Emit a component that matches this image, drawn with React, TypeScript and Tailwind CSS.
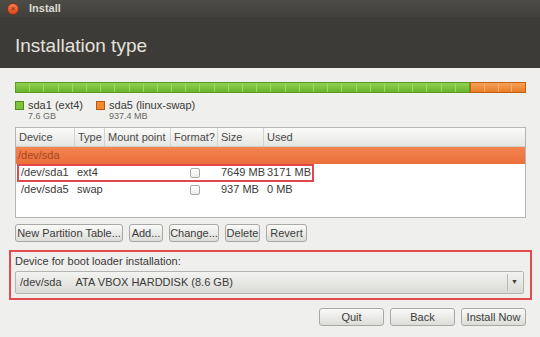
import React from "react";

const columns = [
    { label: "Device", width: "w-[59px]" },
    { label: "Type", width: "w-[30px]" },
    { label: "Mount point", width: "w-[66px]" },
    { label: "Format?", width: "w-[47px]" },
    { label: "Size", width: "w-[46px]" },
    { label: "Used", width: "flex-1" },
];

function CheckBox() {
    return <div className="w-[10px] h-[10px] rounded-[2px] border border-[#a9a9a5] bg-gradient-to-b from-white to-[#ececea]" />;
}

function PartitionRow(props: { device: string; type: string; size: string; used: string; boxed?: boolean }) {
    return (
        <div className="relative flex h-[17px] items-center whitespace-nowrap text-[#3a3a38]">
            <div className="w-[59px] pl-[5px]">{props.device}</div>
            <div className="w-[30px] pl-[2px]">{props.type}</div>
            <div className="w-[66px]" />
            <div className="w-[47px] flex justify-center"><CheckBox /></div>
            <div className="w-[46px] pl-[3px]">{props.size}</div>
            <div className="flex-1 pl-[3px]">{props.used}</div>
            {props.boxed && (
                <div className="absolute left-[1px] top-0 w-[297px] h-[18px] border-2 border-[#e2474d]" />
            )}
        </div>
    );
}

function Button(props: { label: string; className?: string }) {
    return (
        <div className={"h-[18px] flex items-center justify-center whitespace-nowrap rounded-[3px] border border-[#a8a8a4] bg-gradient-to-b from-[#fafaf9] to-[#dcdcd8] text-[11px] text-[#3c3c3a] " + (props.className || "")}>
            {props.label}
        </div>
    );
}

function App() {
    const greenSegments = Array.from({ length: 32 });
    const orangeSegments = Array.from({ length: 4 });

    return (
        <div className="w-[540px] h-[337px] overflow-hidden bg-[#efefed] font-['Liberation_Sans',Arial,sans-serif]">

            <div className="h-[68px] bg-[#3c3b37]">
                <div className="h-[17px] flex items-center bg-gradient-to-b from-[#4d4c47] to-[#403f3b]">
                    <div className="ml-[7px] w-[12px] h-[12px] rounded-full bg-gradient-to-b from-[#f57d52] to-[#d9461b] border border-[#8f3214] flex items-center justify-center text-[8px] leading-none text-[#7a2a10]">
                        ×
                    </div>
                    <span className="ml-[10px] text-[11px] font-bold text-[#dcd9d2]">Install</span>
                </div>
                <h1 className="mt-[17px] pl-[15px] text-[19px] leading-[24px] text-[#e4e1dc]">
                    Installation type
                </h1>
            </div>

            <div className="px-[15px] pt-[14px]">

                <div className="flex h-[11px] w-[511px]">
                    <div className="w-[455px] flex border border-[#5c9a24] bg-gradient-to-b from-[#8fd24e] to-[#6cb32c]">
                        {greenSegments.map((_, i) => (
                            <div key={i} className="flex-1 border-r border-[#9bd864] last:border-r-0" />
                        ))}
                    </div>
                    <div className="flex-1 flex border border-[#c45f16] bg-gradient-to-b from-[#f7a055] to-[#e87d25]">
                        {orangeSegments.map((_, i) => (
                            <div key={i} className="flex-1 border-r border-[#f3ae6f] last:border-r-0" />
                        ))}
                    </div>
                </div>

                <div className="mt-[6px] flex text-[#3a3a38]">
                    <div className="flex">
                        <div className="mt-[2px] w-[9px] h-[9px] border border-[#4f8a1c] bg-[#7cc53a]" />
                        <div className="ml-[4px]">
                            <div className="text-[11px] leading-[12px]">sda1 (ext4)</div>
                            <div className="text-[9px] leading-[11px] text-[#6a6a66]">7.6 GB</div>
                        </div>
                    </div>
                    <div className="ml-[13px] flex">
                        <div className="mt-[2px] w-[9px] h-[9px] border border-[#b9560f] bg-[#f08a2d]" />
                        <div className="ml-[4px]">
                            <div className="text-[11px] leading-[12px]">sda5 (linux-swap)</div>
                            <div className="text-[9px] leading-[11px] text-[#6a6a66]">937.4 MB</div>
                        </div>
                    </div>
                </div>

                <div className="mt-[5px] w-[511px] h-[91px] border border-[#b5b5b1] bg-white text-[11px]">
                    <div className="flex h-[19px] bg-gradient-to-b from-[#fbfbfa] to-[#e6e6e3] border-b border-[#cfcfcb] text-[#4a4a48] whitespace-nowrap">
                        {columns.map((col) => (
                            <div key={col.label} className={col.width + " flex items-center pl-[3px] border-r border-[#d2d2ce] last:border-r-0"}>
                                {col.label}
                            </div>
                        ))}
                    </div>
                    <div className="h-[17px] flex items-center pl-[2px] bg-gradient-to-b from-[#f2834f] to-[#ec6f3a] text-[#a4471f]">
                        /dev/sda
                    </div>
                    <PartitionRow device="/dev/sda1" type="ext4" size="7649 MB" used="3171 MB" boxed />
                    <PartitionRow device="/dev/sda5" type="swap" size="937 MB" used="0 MB" />
                </div>

                <div className="mt-[6px] flex gap-[6px]">
                    <Button label="New Partition Table..." className="w-[108px]" />
                    <Button label="Add..." className="w-[34px]" />
                    <Button label="Change..." className="w-[50px]" />
                    <Button label="Delete" className="w-[35px]" />
                    <Button label="Revert" className="w-[41px]" />
                </div>

                <div className="mt-[8px] -ml-[6px] w-[523px] h-[50px] border-2 border-[#e24a4f] pt-[3px] pl-[4px]">
                    <div className="text-[11px] leading-[13px] text-[#3a3a38]">Device for boot loader installation:</div>
                    <div className="mt-[3px] w-[509px] h-[23px] flex items-center rounded-[2px] border border-[#b4b4b0] bg-gradient-to-b from-[#f3f3f1] to-[#dadad6] text-[11px] text-[#3a3a38]">
                        <span className="pl-[4px]">/dev/sda</span>
                        <span className="pl-[14px]">ATA VBOX HARDDISK (8.6 GB)</span>
                        <div className="ml-auto mr-[2px] w-[14px] h-[17px] flex items-center justify-center border-l border-[#b9b9b5] text-[7px] text-[#3c3c3a]">
                            ▼
                        </div>
                    </div>
                </div>

                <div className="mt-[8px] flex justify-end gap-[6px] w-[511px]">
                    <Button label="Quit" className="w-[65px]" />
                    <Button label="Back" className="w-[65px]" />
                    <Button label="Install Now" className="w-[65px]" />
                </div>
            </div>
        </div>
    );
}

export default App;
